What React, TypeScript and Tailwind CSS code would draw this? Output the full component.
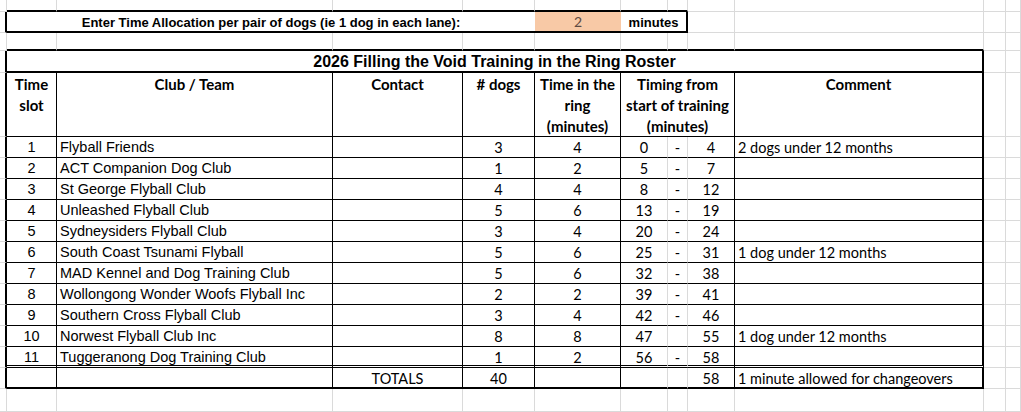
import * as React from 'react';

// spreadsheet columns (px): margin, slot, club, contact, dogs, ring, start, dash, end, comment, spare, spare
const cols = "grid-cols-[7px_50px_276px_130px_72px_86px_47px_20px_47px_249px_22px_15px]";
const rows = "grid-rows-[12px_21px_18px_22px_64px_repeat(12,21px)_23px]";

// each cell owns its right and bottom edge
const gR = "border-r border-r-[#dadada]";
const gB = "border-b border-b-[#dadada]";
const kR = "border-r border-r-black";
const kB = "border-b border-b-black";
const KR = "border-r-2 border-r-black";
const KB = "border-b-2 border-b-black";
const dB = "border-b-[3px] [border-bottom-style:double] border-b-black";

const arial = "font-['Liberation_Sans',Arial,sans-serif]";
const cal = "font-['Lato','Noto_Sans',sans-serif]";

const roster = [
  { slot: 1, club: "Flyball Friends", dogs: 3, ring: 4, start: 0, end: 4, comment: "2 dogs under 12 months" },
  { slot: 2, club: "ACT Companion Dog Club", dogs: 1, ring: 2, start: 5, end: 7 },
  { slot: 3, club: "St George Flyball Club", dogs: 4, ring: 4, start: 8, end: 12 },
  { slot: 4, club: "Unleashed Flyball Club", dogs: 5, ring: 6, start: 13, end: 19 },
  { slot: 5, club: "Sydneysiders Flyball Club", dogs: 3, ring: 4, start: 20, end: 24 },
  { slot: 6, club: "South Coast Tsunami Flyball", dogs: 5, ring: 6, start: 25, end: 31, comment: "1 dog under 12 months" },
  { slot: 7, club: "MAD Kennel and Dog Training Club", dogs: 5, ring: 6, start: 32, end: 38 },
  { slot: 8, club: "Wollongong Wonder Woofs Flyball Inc", dogs: 2, ring: 2, start: 39, end: 41 },
  { slot: 9, club: "Southern Cross Flyball Club", dogs: 3, ring: 4, start: 42, end: 46 },
  { slot: 10, club: "Norwest Flyball Club Inc", dogs: 8, ring: 8, start: 47, end: 55, comment: "1 dog under 12 months", noDash: true },
  { slot: 11, club: "Tuggeranong Dog Training Club", dogs: 1, ring: 2, start: 56, end: 58 },
];

function Gray() {
  return <div className={`${gR} ${gB}`} />;
}

const txt = "text-[14.5px] leading-[21px] text-black";

function DataRow({ r, last }: { r: any; last: boolean }) {
  const b = last ? dB : kB;
  return (
    <>
      <div className={`${KR} ${gB}`} />
      <div className={`${kR} ${b} ${arial} ${txt} text-center`}>{r.slot}</div>
      <div className={`${kR} ${b} ${arial} ${txt} pl-[3px] whitespace-nowrap`}>{r.club}</div>
      <div className={`${kR} ${b}`} />
      <div className={`${kR} ${b} ${cal} ${txt} text-center`}>{r.dogs}</div>
      <div className={`${kR} ${b} ${cal} ${txt} text-center`}>{r.ring}</div>
      <div className={`${gR} ${b} ${cal} ${txt} text-center`}>{r.start}</div>
      <div className={`${gR} ${b} ${cal} ${txt} text-center`}>{r.noDash ? "" : "-"}</div>
      <div className={`${kR} ${b} ${cal} ${txt} text-center`}>{r.end}</div>
      <div className={`${KR} ${b} ${cal} ${txt} pl-[3px] whitespace-nowrap`}>{r.comment ?? ""}</div>
      <Gray />
      <Gray />
    </>
  );
}

export default function App() {
  const head = `${cal} text-[15px] leading-[21px] font-bold text-black text-center pt-[1px] whitespace-nowrap`;
  return (
    <div className={`grid ${cols} ${rows} w-[1021px] h-[412px] bg-white overflow-hidden`}>
      {/* row 0 */}
      <Gray />
      {[1, 2, 3, 4, 5, 6, 7].map((i) => (
        <div key={i} className={`${gR} ${KB}`} />
      ))}
      <Gray /><Gray /><Gray /><Gray />

      {/* row 1: time allocation input */}
      <div className={`${KR} ${gB}`} />
      <div className={`col-span-4 ${KB} ${arial} text-[13px] leading-[21px] font-bold text-center text-black`}>
        Enter Time Allocation per pair of dogs (ie 1 dog in each lane):
      </div>
      <div className={`${KB} bg-[#f8c9a6] ${cal} text-[14px] leading-[20px] text-center text-[#5e4a43]`}>2</div>
      <div className={`col-span-2 ${KR} ${KB} ${arial} text-[13px] leading-[21px] font-bold text-center text-black`}>minutes</div>
      <Gray /><Gray /><Gray /><Gray />

      {/* row 2: spacer, table top */}
      <Gray />
      {[1, 2, 3, 4, 5, 6, 7, 8, 9].map((i) => (
        <div key={i} className={`${gR} ${KB}`} />
      ))}
      <Gray /><Gray />

      {/* row 3: title */}
      <div className={`${KR} ${gB}`} />
      <div className={`col-span-9 ${KR} ${KB} ${arial} text-[16px] leading-[21px] font-bold text-center text-black`}>
        2026 Filling the Void Training in the Ring Roster
      </div>
      <Gray /><Gray />

      {/* row 4: headers */}
      <div className={`${KR} ${gB}`} />
      <div className={`${kR} ${kB} ${head}`}>Time<br />slot</div>
      <div className={`${kR} ${kB} ${head}`}>Club / Team</div>
      <div className={`${kR} ${kB} ${head}`}>Contact</div>
      <div className={`${kR} ${kB} ${head}`}># dogs</div>
      <div className={`${kR} ${kB} ${head}`}>Time in the<br />ring<br />(minutes)</div>
      <div className={`col-span-3 ${kR} ${kB} ${head}`}>Timing from<br />start of training<br />(minutes)</div>
      <div className={`${KR} ${kB} ${head}`}>Comment</div>
      <Gray /><Gray />

      {roster.map((r, i) => (
        <DataRow key={r.slot} r={r} last={i === roster.length - 1} />
      ))}

      {/* totals */}
      <div className={`${KR} ${gB}`} />
      <div className={`${kR} ${KB}`} />
      <div className={`${kR} ${KB}`} />
      <div className={`${kR} ${KB} ${cal} ${txt} text-center`}>TOTALS</div>
      <div className={`${kR} ${KB} ${cal} ${txt} text-center`}>40</div>
      <div className={`${kR} ${KB}`} />
      <div className={`${gR} ${KB}`} />
      <div className={`${gR} ${KB}`} />
      <div className={`${kR} ${KB} ${cal} ${txt} text-center`}>58</div>
      <div className={`${KR} ${KB} ${cal} ${txt} pl-[3px] whitespace-nowrap`}>1 minute allowed for changeovers</div>
      <Gray /><Gray />

      {/* trailing empty row */}
      {Array.from({ length: 12 }).map((_, i) => (
        <Gray key={i} />
      ))}
    </div>
  );
}
